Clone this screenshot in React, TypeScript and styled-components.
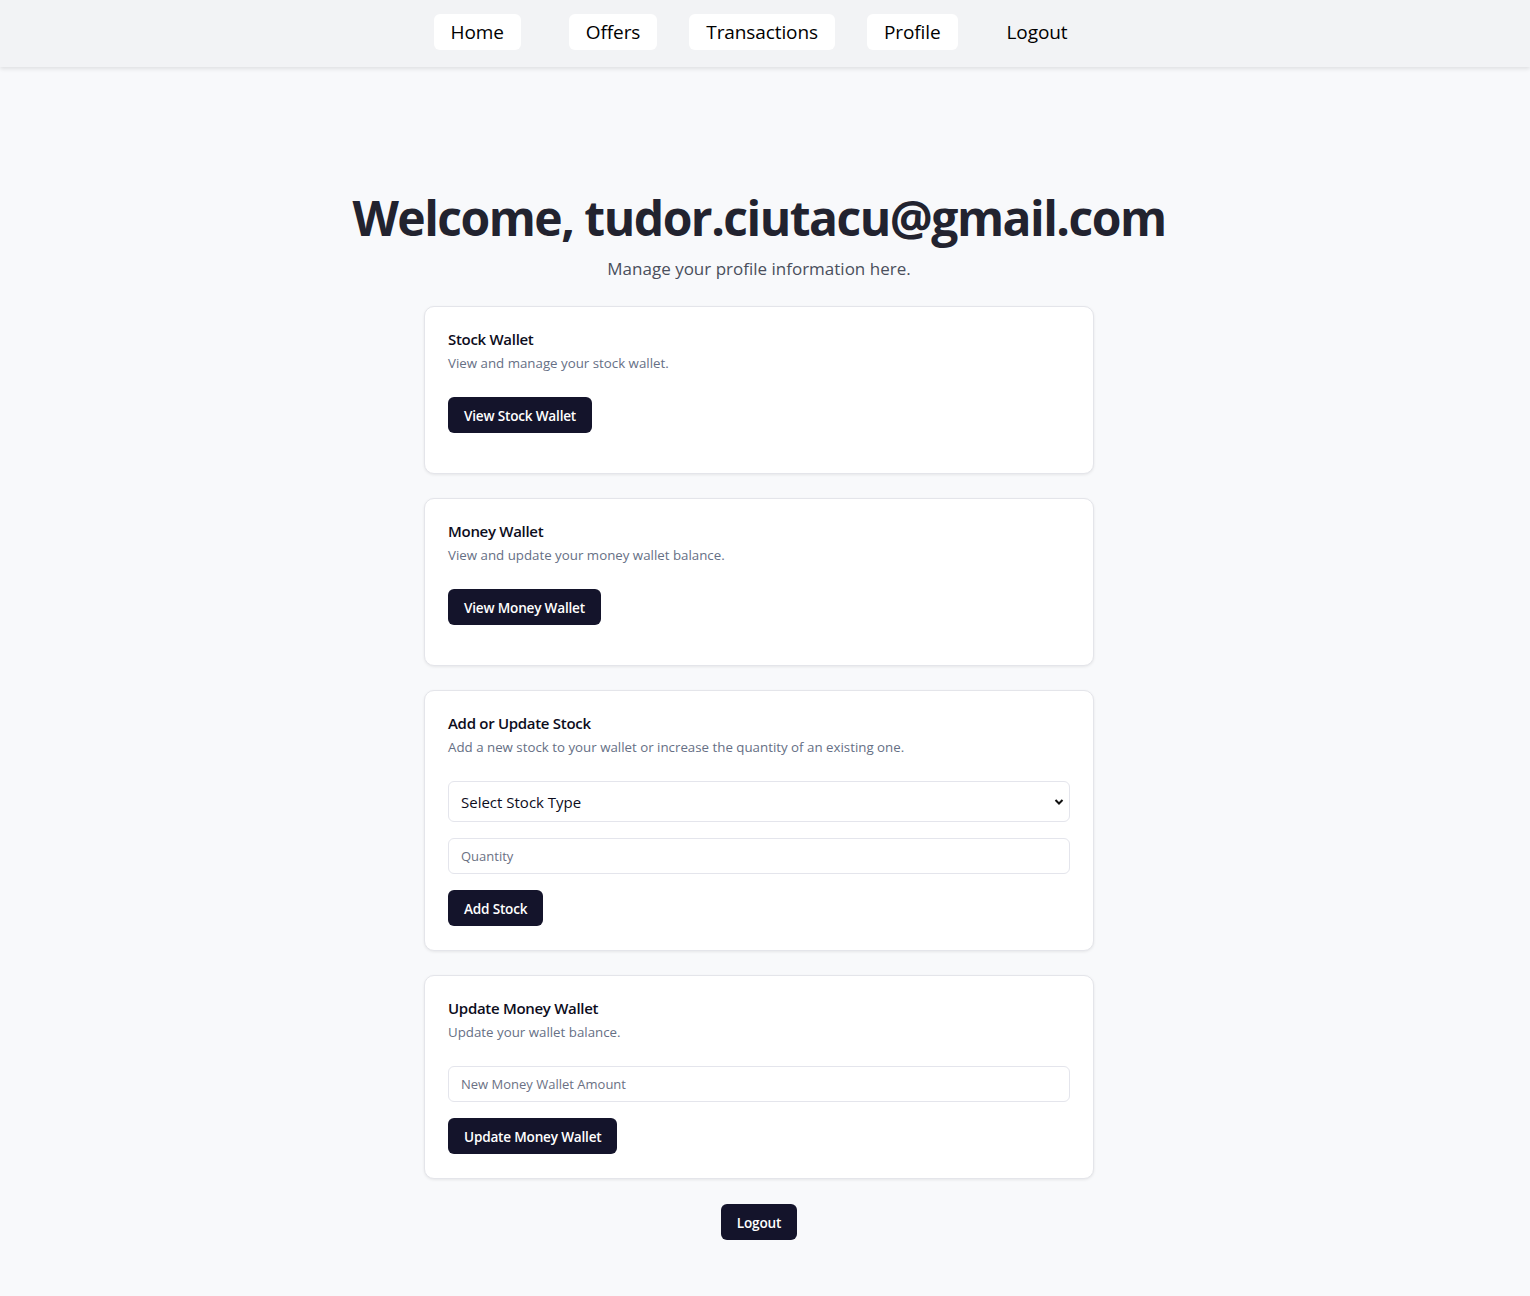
import React from "react";
import styled, { createGlobalStyle } from "styled-components";

const Global = createGlobalStyle`
  * { box-sizing: border-box; }
  html, body { margin: 0; padding: 0; }
  body {
    background: #f8f9fb;
    font-family: "Open Sans", "Noto Sans", sans-serif;
    color: #0f0f1f;
  }
`;

const Nav = styled.nav`
  height: 67px;
  background: #f2f3f5;
  box-shadow: 0 2px 4px rgba(0, 0, 0, 0.1);
  display: flex;
  align-items: center;
  justify-content: center;
  padding: 0 12px 3px 0;
  position: relative;
`;

const NavLinks = styled.div`
  display: flex;
  align-items: center;
`;

const NavItem = styled.a<{ $plain?: boolean; $ml: number }>`
  margin-left: ${(p) => p.$ml}px;
  height: 36px;
  padding: 0 17px;
  display: flex;
  align-items: center;
  border-radius: 6px;
  background: ${(p) => (p.$plain ? "transparent" : "#ffffff")};
  color: #000;
  font-size: 19px;
  font-weight: 500;
  text-decoration: none;
  letter-spacing: -0.1px;
`;

const Main = styled.main`
  padding: 121px 12px 57px 0;
  display: flex;
  flex-direction: column;
  align-items: center;
`;

const Title = styled.h1`
  margin: 0;
  font-size: 48px;
  line-height: 60px;
  font-weight: 700;
  color: #22232f;
  letter-spacing: -1.5px;
`;

const Subtitle = styled.p`
  margin: 7px 0 0;
  font-size: 17px;
  line-height: 28px;
  color: #4a4f5c;
`;

const Cards = styled.div`
  margin-top: 23px;
  width: 670px;
  display: flex;
  flex-direction: column;
  gap: 24px;
`;

const Card = styled.section`
  background: #fff;
  border: 1px solid #e4e5ea;
  border-radius: 10px;
  box-shadow: 0 1px 3px rgba(0, 0, 0, 0.08);
`;

const CardHeader = styled.div`
  padding: 24px 23px;
  display: flex;
  flex-direction: column;
  gap: 6px;
`;

const CardTitle = styled.h2`
  margin: 0;
  font-size: 15px;
  line-height: 16px;
  font-weight: 600;
  color: #0d0d1c;
  letter-spacing: -0.3px;
`;

const CardDesc = styled.p`
  margin: 0;
  font-size: 13.3px;
  line-height: 20px;
  color: #667085;
`;

const CardContent = styled.div<{ $extra?: boolean }>`
  padding: 0 23px ${(p) => (p.$extra ? 40 : 24)}px;
  display: flex;
  flex-direction: column;
  align-items: flex-start;
  gap: 16px;
`;

const Button = styled.button`
  height: 36px;
  padding: 0 16px;
  border: none;
  border-radius: 6px;
  background: #14142b;
  color: #fff;
  font-family: inherit;
  font-size: 13.6px;
  font-weight: 600;
  letter-spacing: -0.2px;
  cursor: pointer;
`;

const SelectBox = styled.div`
  width: 100%;
  height: 41px;
  border: 1px solid #e4e5ec;
  border-radius: 6px;
  background: #fff;
  display: flex;
  align-items: center;
  padding: 0 5px 0 12px;
  font-size: 15px;
  color: #0d0d1c;
  justify-content: space-between;
`;

const Input = styled.input`
  width: 100%;
  height: 36px;
  border: 1px solid #e4e5ec;
  border-radius: 6px;
  background: #fff;
  padding: 0 12px;
  font-family: inherit;
  font-size: 13px;
  color: #0d0d1c;
  outline: none;
  &::placeholder { color: #6b7184; }
`;

const Footer = styled.div`
  margin-top: 25px;
`;

const Chevron = () => (
  <svg width="10" height="8" viewBox="0 0 10 8">
    <path d="M1.5 2 L5 5.5 L8.5 2" fill="none" stroke="#111" strokeWidth="2" />
  </svg>
);

export default function App() {
  return (
    <>
      <Global />
      <Nav>
        <NavLinks>
          <NavItem $ml={0}>Home</NavItem>
          <NavItem $ml={48}>Offers</NavItem>
          <NavItem $ml={32}>Transactions</NavItem>
          <NavItem $ml={32}>Profile</NavItem>
          <NavItem $ml={32} $plain>Logout</NavItem>
        </NavLinks>
      </Nav>
      <Main>
        <Title>Welcome, tudor.ciutacu@gmail.com</Title>
        <Subtitle>Manage your profile information here.</Subtitle>
        <Cards>
          <Card>
            <CardHeader>
              <CardTitle>Stock Wallet</CardTitle>
              <CardDesc>View and manage your stock wallet.</CardDesc>
            </CardHeader>
            <CardContent $extra>
              <Button>View Stock Wallet</Button>
            </CardContent>
          </Card>
          <Card>
            <CardHeader>
              <CardTitle>Money Wallet</CardTitle>
              <CardDesc>View and update your money wallet balance.</CardDesc>
            </CardHeader>
            <CardContent $extra>
              <Button>View Money Wallet</Button>
            </CardContent>
          </Card>
          <Card>
            <CardHeader>
              <CardTitle>Add or Update Stock</CardTitle>
              <CardDesc>
                Add a new stock to your wallet or increase the quantity of an existing one.
              </CardDesc>
            </CardHeader>
            <CardContent>
              <SelectBox>
                <span>Select Stock Type</span>
                <Chevron />
              </SelectBox>
              <Input placeholder="Quantity" />
              <Button>Add Stock</Button>
            </CardContent>
          </Card>
          <Card>
            <CardHeader>
              <CardTitle>Update Money Wallet</CardTitle>
              <CardDesc>Update your wallet balance.</CardDesc>
            </CardHeader>
            <CardContent>
              <Input placeholder="New Money Wallet Amount" />
              <Button>Update Money Wallet</Button>
            </CardContent>
          </Card>
        </Cards>
        <Footer>
          <Button>Logout</Button>
        </Footer>
      </Main>
    </>
  );
}
